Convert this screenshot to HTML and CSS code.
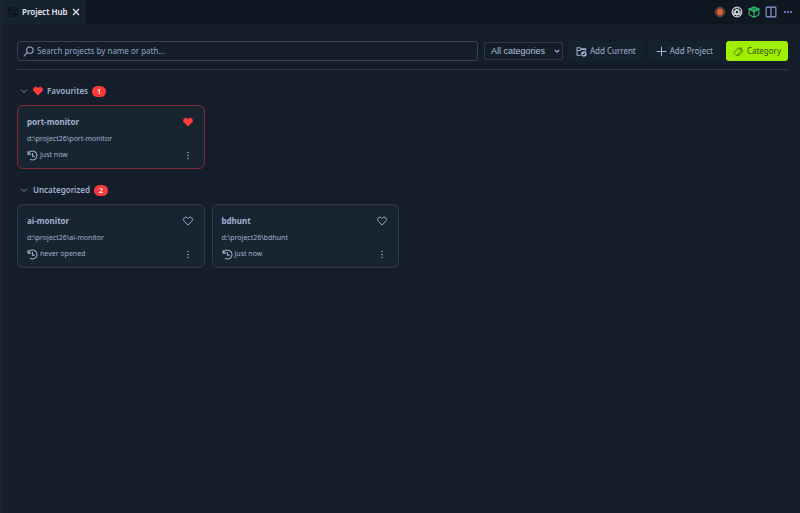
FILE: index.html
```html
<!doctype html>
<html lang="en">
<head>
	<meta charset="utf-8">
	<title>Project Hub</title>
	<link rel="stylesheet" href="styles.css">
</head>
<body>

<!-- shared icons -->
<svg class="sprite" aria-hidden="true">
	<symbol id="i-heart" viewBox="0 0 16 16"><path d="M8 14.500L2 8.500C.5 7 .5 4.500 2 3c1.700-1.600 4.500-1.400 6 1 1.500-2.400 4.300-2.600 6-1 1.500 1.500 1.500 4 0 5.500z"/></symbol>
	<symbol id="i-chevron" viewBox="0 0 16 16"><path d="M2 5l6 6 6-6"/></symbol>
	<symbol id="i-history" viewBox="0 0 16 16"><path d="M1.500 1.500V6H6M2 5.500A6.500 6.500 0 1 1 4.500 13.500M8 4.500V9h3.500"/></symbol>
	<symbol id="i-dots" viewBox="0 0 16 16"><circle cx="8" cy="2.500" r="1.300"/><circle cx="8" cy="8" r="1.300"/><circle cx="8" cy="13.500" r="1.300"/></symbol>
</svg>

<header class="tabbar">
	<div class="tab">
		<svg class="tab-icon" viewBox="0 0 16 16"><rect x="1" y="1" width="5" height="5" rx="1"/><rect x="10" y="1" width="5" height="5" rx="1"/><rect x="1" y="10" width="5" height="5" rx="1"/><path d="M9 9h3v3H9zM12 12h3v3h-3z"/></svg>
		<span>Project Hub</span>
		<button class="close" aria-label="Close tab"><svg viewBox="0 0 8 8"><path d="M1 1l6 6M7 1L1 7"/></svg></button>
	</div>
	<div class="actions">
		<button aria-label="Claude"><svg class="claude" viewBox="0 0 16 16"><path d="M8 8V1M8 8l3.500-6M8 8l6-3.500M8 8h7M8 8l6 3.500M8 8l3.500 6M8 8v7M8 8l-3.500 6M8 8l-6 3.500M8 8H1M8 8L2 4.500M8 8L4.500 2"/></svg></button>
		<button aria-label="Codex"><svg class="codex" viewBox="0 0 16 16"><circle cx="8" cy="8" r="6.500"/><path d="M5.500 3.500L12 7v5M10.500 3.500L4 7v5M3 9l5 3.500L13 9M8 5.500l2.200 1.300v2.500L8 10.500 5.800 9.300V6.800z"/></svg></button>
		<button aria-label="Packages"><svg class="box" viewBox="0 0 16 16"><path class="top" d="M8 1l6.500 3L8 7.500 1.500 4z"/><path d="M1.500 4v7.500L8 15l6.500-3.500V4L8 7.500zM8 7.500V15"/></svg></button>
		<button aria-label="Split editor"><svg class="split" viewBox="0 0 16 16"><rect x="1.500" y="1.500" width="13" height="13" rx="1"/><path d="M8 1.500v13"/></svg></button>
		<button aria-label="More"><svg class="more" viewBox="0 0 16 16"><circle cx="4" cy="8" r="1.300"/><circle cx="8" cy="8" r="1.300"/><circle cx="12" cy="8" r="1.300"/></svg></button>
	</div>
</header>

<main class="hub">
	<div class="toolbar">
		<label class="search">
			<svg viewBox="0 0 16 16"><circle cx="10" cy="6" r="4.700"/><path d="M6.700 9.300L1 15"/></svg>
			<input type="text" aria-label="Search projects" placeholder="Search projects by name or path...">
		</label>
		<div class="filter">
			<select aria-label="Category filter">
				<option>All categories</option>
			</select>
			<svg viewBox="0 0 16 16"><use href="#i-chevron"/></svg>
		</div>
		<button class="btn">
			<svg viewBox="0 0 16 16"><path d="M7 13.500H1.500v-11H6L7.500 4h6.500v4M1.500 6.500H6L7.500 5H14"/><circle class="disc" cx="11.500" cy="11.500" r="4"/><path class="tick" d="M9.700 11.600l1.300 1.300 2.300-2.600"/></svg>
			Add Current
		</button>
		<button class="btn">
			<svg viewBox="0 0 16 16"><path d="M8 1v14M1 8h14"/></svg>
			Add Project
		</button>
		<button class="btn primary">
			<svg viewBox="0 0 16 16"><path d="M1.500 9.500L7.500 3H12v4.500L6 13.500H4.500L1.500 10.500zM12 4l2.500 3.500-5.500 6H6"/><circle cx="9.500" cy="5.500" r=".5"/></svg>
			Category
		</button>
	</div>

	<section class="group">
		<h2>
			<svg class="chevron" viewBox="0 0 16 16"><use href="#i-chevron"/></svg>
			<svg class="heart on" viewBox="0 0 16 16"><use href="#i-heart"/></svg>
			Favourites
			<span class="count">1</span>
		</h2>
		<div class="cards">
			<article class="card fav">
				<div class="row">
					<h3>port-monitor</h3>
					<button aria-label="Remove from favourites"><svg class="heart on" viewBox="0 0 16 16"><use href="#i-heart"/></svg></button>
				</div>
				<p class="path">d:\project26\port-monitor</p>
				<div class="row">
					<span class="time"><svg viewBox="0 0 16 16"><use href="#i-history"/></svg>just now</span>
					<button aria-label="Project menu"><svg class="dots" viewBox="0 0 16 16"><use href="#i-dots"/></svg></button>
				</div>
			</article>
		</div>
	</section>

	<section class="group">
		<h2>
			<svg class="chevron" viewBox="0 0 16 16"><use href="#i-chevron"/></svg>
			Uncategorized
			<span class="count">2</span>
		</h2>
		<div class="cards">
			<article class="card">
				<div class="row">
					<h3>ai-monitor</h3>
					<button aria-label="Add to favourites"><svg class="heart" viewBox="0 0 16 16"><use href="#i-heart"/></svg></button>
				</div>
				<p class="path">d:\project26\ai-monitor</p>
				<div class="row">
					<span class="time"><svg viewBox="0 0 16 16"><use href="#i-history"/></svg>never opened</span>
					<button aria-label="Project menu"><svg class="dots" viewBox="0 0 16 16"><use href="#i-dots"/></svg></button>
				</div>
			</article>
			<article class="card">
				<div class="row">
					<h3>bdhunt</h3>
					<button aria-label="Add to favourites"><svg class="heart" viewBox="0 0 16 16"><use href="#i-heart"/></svg></button>
				</div>
				<p class="path">d:\project26\bdhunt</p>
				<div class="row">
					<span class="time"><svg viewBox="0 0 16 16"><use href="#i-history"/></svg>just now</span>
					<button aria-label="Project menu"><svg class="dots" viewBox="0 0 16 16"><use href="#i-dots"/></svg></button>
				</div>
			</article>
		</div>
	</section>
</main>

</body>
</html>
```
FILE: styles.css
```css
*{ box-sizing: border-box; margin: 0; padding: 0}
body{ min-height: 100vh; background: #141e2a; border-left: 2px solid #1a2532; color: #a3b0d0; font: 8px/12px "Noto Sans", "Open Sans", sans-serif}
button{ background: none; border: 0; color: inherit; font: inherit; cursor: pointer}
svg{ display: block; flex: none; fill: none; stroke: currentColor; stroke-width: 1.5}
.sprite{ position: absolute; width: 0; height: 0}

/* tab bar */
.tabbar{ display: flex; justify-content: space-between; height: 24px; background: #0e1722}
.tab{ display: flex; align-items: center; gap: 4px; padding: 0 6px; background: #172230; color: #e4e8ee; font-weight: 600}
.tab-icon{ width: 10px; height: 10px; color: #070c14}
.close svg{ width: 8px; height: 8px; stroke-width: 1.2}
.actions{ display: flex; align-items: center; gap: 5px; padding-right: 6px}
.actions svg{ width: 12px; height: 12px}
.actions .claude{ color: #d9663f}
.actions .codex{ color: #d3d7dc}
.actions .box{ color: #35b571}
.actions .top{ fill: #1f8a55}
.actions .split{ color: #8f9fd0}
.actions .more{ color: #8095d0; fill: currentColor; stroke: none}

/* search and buttons */
.hub{ padding: 17px 12px 16px 15px}
.toolbar{ display: flex; align-items: center; gap: 6px; padding-bottom: 8px; border-bottom: 1px solid #303b48}
.search{ display: flex; flex: 1; align-items: center; gap: 3px; height: 20px; padding: 0 5px; border: 1px solid #36424f; border-radius: 3px}
.search svg{ width: 11px; height: 11px}
.search input{ flex: 1; min-width: 0; background: none; border: 0; outline: 0; color: inherit; font: inherit}
.search input::placeholder{ color: #93a1c4; opacity: 1}
.filter{ display: grid; align-items: center; width: 79px}
.filter select, .filter svg{ grid-area: 1 / 1}
.filter select{ appearance: none; height: 18px; padding: 0 6px; background: #141e2a; border: 1px solid #303c4a; border-radius: 2px; color: #b4bfdc; font: 9px "Liberation Sans", Arial, sans-serif}
.filter svg{ justify-self: end; width: 6px; height: 6px; margin-right: 3px; stroke-width: 3; pointer-events: none}
.btn{ display: flex; align-items: center; gap: 3px; height: 20px; padding: 0 7px; background: #16212e; border-radius: 3px; white-space: nowrap}
.btn svg{ width: 11px; height: 11px}
.btn .disc{ fill: currentColor; stroke: none}
.btn .tick{ stroke: #16212e}
.primary{ background: #9ef000; color: #34530b}
.primary svg{ stroke-width: 1}

/* project groups */
.group{ padding-top: 14px}
.group h2{ display: flex; align-items: center; gap: 4px; height: 14px; padding-left: 3px; font-size: 8px; font-weight: 600}
.chevron{ width: 8px; height: 8px; margin-right: 1px}
.heart{ width: 10px; height: 10px}
.on{ fill: #ff3b3b; stroke: #ff3b3b}
.count{ padding: 0 5px; border-radius: 6px; background: #f83a3a; color: #fff; font-size: 7px; line-height: 11px}
.cards{ display: grid; grid-template-columns: repeat(auto-fill, minmax(160px, 1fr)); gap: 7px; padding-top: 7px}
.card{ padding: 9px 9px 7px; background: #192431; border: 1px solid #303c49; border-radius: 6px}
.fav{ border-color: #822b36}
.row{ display: flex; align-items: center; justify-content: space-between; padding-right: 2px}
.card h3{ font-size: 8px; line-height: 14px; font-weight: 700}
.path{ padding: 5px 0; font-size: 7px; line-height: 10px}
.time{ display: flex; align-items: center; gap: 2px; font-size: 7px}
.time svg{ width: 11px; height: 11px}
.dots{ width: 10px; height: 9px; fill: currentColor; stroke: none}
```
